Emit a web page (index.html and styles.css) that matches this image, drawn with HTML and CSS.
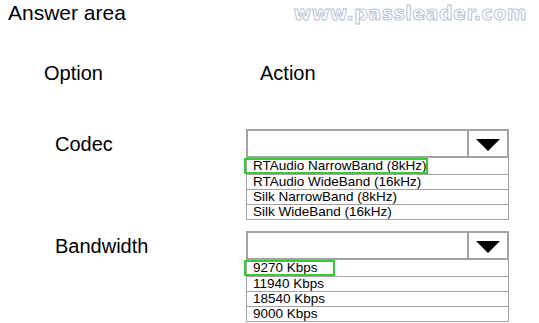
FILE: index.html
```html
<!DOCTYPE html>
<html lang="en">
<head>
  <meta charset="UTF-8" />
  <title>Answer area</title>
  <link rel="stylesheet" href="styles.css">
</head>
<body>
  <div class="top">
    <h2 class="title">Answer area</h2>
    <div class="watermark">www.passleader.com</div>
  </div>

  <div class="grid">
    <div class="col-head option">Option</div>
    <div class="col-head action">Action</div>

    <div class="label">Codec</div>
    <div class="dropdown">
      <div class="select">
        <span class="value"></span>
        <span class="arrow"></span>
      </div>
      <ul class="list">
        <li class="picked"><span class="mark mark-codec"></span>RTAudio NarrowBand (8kHz)</li>
        <li>RTAudio WideBand (16kHz)</li>
        <li>Silk NarrowBand (8kHz)</li>
        <li>Silk WideBand (16kHz)</li>
      </ul>
    </div>

    <div class="label">Bandwidth</div>
    <div class="dropdown">
      <div class="select">
        <span class="value"></span>
        <span class="arrow"></span>
      </div>
      <ul class="list">
        <li class="picked"><span class="mark mark-band"></span>9270 Kbps</li>
        <li>11940 Kbps</li>
        <li>18540 Kbps</li>
        <li>9000 Kbps</li>
      </ul>
    </div>
  </div>
</body>
</html>
```

FILE: styles.css
```css
body {
  margin: 0;
  background: #fff;
  color: #000;
  font-family: 'Liberation Sans', Arial, sans-serif;
  width: 539px;
  height: 323px;
  overflow: hidden;
}
.top {
  display: flex;
  justify-content: space-between;
  align-items: flex-start;
  height: 62px;
}
.title {
  margin: 0;
  padding: 1px 0 0 8px;
  font-size: 21px;
  font-weight: normal;
  line-height: 24px;
}
.watermark {
  margin: 2px 12px 0 0;
  font-family: 'DejaVu Sans', sans-serif;
  font-weight: bold;
  font-size: 19px;
  letter-spacing: 0.5px;
  color: #fff;
  -webkit-text-stroke: 1px #b9c3d6;
}
.grid {
  display: grid;
  grid-template-columns: 246px 263px;
}
.col-head {
  font-size: 20px;
  line-height: 23px;
  height: 67px;
}
.option { padding-left: 44px; }
.action { padding-left: 14px; }
.label {
  font-size: 20px;
  line-height: 23px;
  padding: 4px 0 0 55px;
}
.dropdown {
  margin-bottom: 11px;
}
.select {
  display: flex;
  height: 25px;
  border: 2px solid #a3a3a3;
}
.value {
  flex: 1;
  border-right: 2px solid #a3a3a3;
}
.arrow {
  width: 38px;
  display: flex;
  justify-content: center;
  align-items: center;
  padding-top: 3px;
  box-sizing: border-box;
}
.arrow::before {
  content: "";
  border-left: 12px solid transparent;
  border-right: 12px solid transparent;
  border-top: 12px solid #000;
}
.list {
  list-style: none;
  margin: 0;
  padding: 0;
  border: 1px solid #a3a3a3;
  border-top: none;
}
.list li {
  position: relative;
  height: 14px;
  line-height: 14px;
  font-size: 13.5px;
  padding-left: 6px;
  border-top: 1px solid #a3a3a3;
}
.list li:first-child {
  border-top: none;
  height: 16px;
  line-height: 16px;
}
.mark {
  position: absolute;
  left: -3px;
  top: 0;
  height: 12px;
  border: 2px solid #33cc33;
}
.mark-codec { width: 180px; }
.mark-band { width: 87px; }
```
